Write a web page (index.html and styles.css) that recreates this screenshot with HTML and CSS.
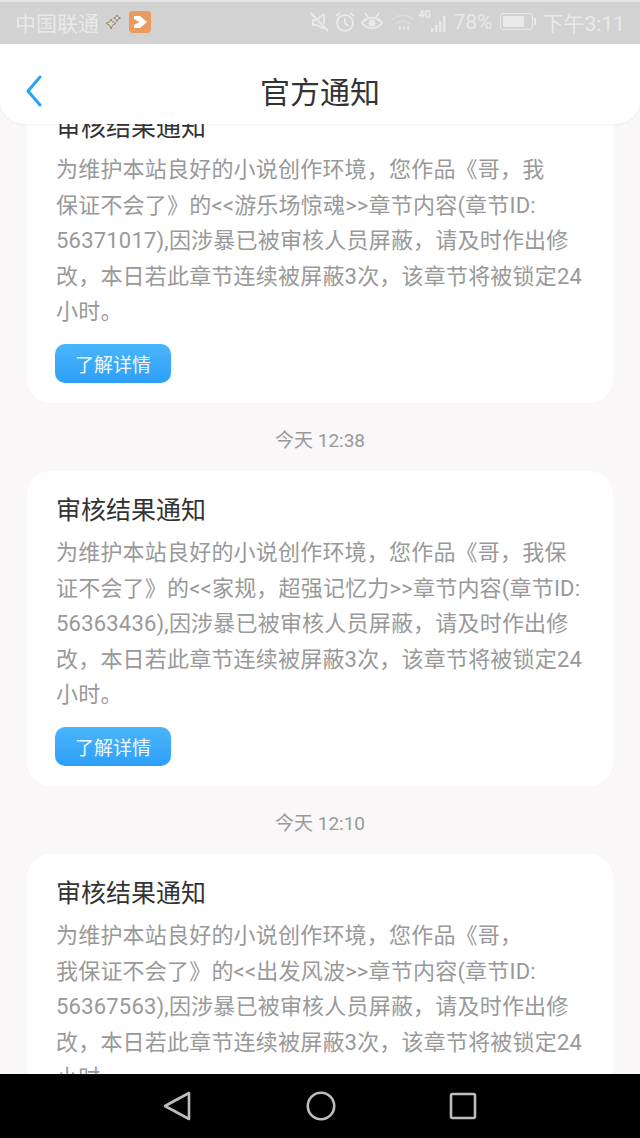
FILE: index.html
```html
<!DOCTYPE html>
<html lang="zh-CN">
<head>
  <meta charset="UTF-8" />
  <meta name="viewport" content="width=device-width, initial-scale=1.0"/>
  <title>官方通知</title>
  <link rel="stylesheet" href="styles.css">
</head>
<body>
  <!-- Status bar -->
  <div class="status-bar">
    <div class="status-left">
      <span>中国联通</span>
      <svg class="sparkle" width="15" height="15" viewBox="0 0 15 15">
        <path d="M5 5 L6.5 8 L10 9.5 L6.5 11 L5 15 L3.5 11 L0 9.5 L3.5 8 Z" fill="#e6dfc4" stroke="#8d8570" stroke-width="1"/>
        <path d="M11 1 L12 3 L14.5 4 L12 5 L11 7.5 L10 5 L7.5 4 L10 3 Z" fill="#eee8d2" stroke="#8d8570" stroke-width="1"/>
      </svg>
      <svg class="app-icon" width="22" height="22" viewBox="0 0 22 22">
        <rect width="22" height="22" rx="4" fill="#eb9a60"/>
        <path d="M5 5 H11 L18 11 L11 17 H5 V14 L10.5 11 L5 8 Z" fill="#fff"/>
      </svg>
    </div>
    <div class="status-right">
      <svg class="ic-mute" width="20" height="20" viewBox="0 0 20 20" fill="none" stroke="#e9e9e9" stroke-width="2">
        <path d="M15 2 V12 M15 17 L8 13 H4 V8 H7 L15 2"/>
        <path d="M2 1 L19 19"/>
      </svg>
      <svg class="ic-alarm" width="22" height="22" viewBox="0 0 22 22" fill="none" stroke="#e9e9e9" stroke-width="2">
        <circle cx="11" cy="12" r="8"/>
        <path d="M11 7 V12 L14.5 15 M2 5 L6 2 M20 5 L16 2"/>
      </svg>
      <svg class="ic-eye" width="22" height="20" viewBox="0 0 22 20" fill="none" stroke="#e9e9e9" stroke-width="2">
        <path d="M1 11 C6 4 16 4 21 11 C16 18 6 18 1 11 Z"/>
        <circle cx="11" cy="11" r="3.5" fill="#e9e9e9" stroke="none"/>
        <path d="M4 1 L7 5 M18 1 L15 5"/>
      </svg>
      <svg class="ic-wifi" width="24" height="16" viewBox="0 0 24 16" fill="none" stroke="#dedede" stroke-width="1.5">
        <path d="M1 6 C7 0 17 0 23 6 M5 10 C9 6 15 6 19 10"/>
        <path d="M8 14 H10 M12 14 H14 M16 14 H18" stroke="#e9e9e9" stroke-width="3"/>
      </svg>
      <div class="signal">
        <span class="net">4G</span>
        <svg width="15" height="16" viewBox="0 0 15 16" fill="#e9e9e9">
          <rect x="0" y="12" width="2.4" height="4"/>
          <rect x="4" y="9" width="2.4" height="7"/>
          <rect x="8" y="5" width="2.4" height="11"/>
          <rect x="12" y="0" width="2.4" height="16"/>
        </svg>
      </div>
      <span class="pct">78%</span>
      <div class="battery"><div class="battery-level" style="width: 78%"></div></div>
      <span class="clock">下午3:11</span>
    </div>
  </div>

  <div class="screen">
    <!-- Title bar -->
    <div class="title-bar">
      <svg class="back" width="18" height="32" viewBox="0 0 18 32" fill="none" stroke="#2aa4f0" stroke-width="3" stroke-linecap="round" stroke-linejoin="round">
        <path d="M15 2 L3 16 L15 30"/>
      </svg>
      <h1>官方通知</h1>
    </div>

    <div class="list">
      <div class="card">
        <h2>审核结果通知</h2>
        <p>为维护本站良好的小说创作环境，您作品《哥，我<br>保证不会了》的&lt;&lt;游乐场惊魂&gt;&gt;章节内容(章节ID:<br>56371017),因涉暴已被审核人员屏蔽，请及时作出修<br>改，本日若此章节连续被屏蔽3次，该章节将被锁定24<br>小时。</p>
        <button class="more-btn">了解详情</button>
      </div>
      <div class="time">今天 12:38</div>
      <div class="card">
        <h2>审核结果通知</h2>
        <p>为维护本站良好的小说创作环境，您作品《哥，我保<br>证不会了》的&lt;&lt;家规，超强记忆力&gt;&gt;章节内容(章节ID:<br>56363436),因涉暴已被审核人员屏蔽，请及时作出修<br>改，本日若此章节连续被屏蔽3次，该章节将被锁定24<br>小时。</p>
        <button class="more-btn">了解详情</button>
      </div>
      <div class="time">今天 12:10</div>
      <div class="card">
        <h2>审核结果通知</h2>
        <p>为维护本站良好的小说创作环境，您作品《哥，<br>我保证不会了》的&lt;&lt;出发风波&gt;&gt;章节内容(章节ID:<br>56367563),因涉暴已被审核人员屏蔽，请及时作出修<br>改，本日若此章节连续被屏蔽3次，该章节将被锁定24<br>小时。</p>
        <button class="more-btn">了解详情</button>
      </div>
    </div>
  </div>

  <!-- Android nav buttons -->
  <div class="nav-bar">
    <svg width="30" height="32" viewBox="0 0 30 32" fill="none" stroke="#bdbdbd" stroke-width="2.6" stroke-linejoin="round">
      <path d="M27 3 V29 L3 16 Z"/>
    </svg>
    <svg width="30" height="30" viewBox="0 0 30 30" fill="none" stroke="#bdbdbd" stroke-width="2.6">
      <circle cx="15" cy="15" r="13.2"/>
    </svg>
    <svg width="28" height="28" viewBox="0 0 28 28" fill="none" stroke="#bdbdbd" stroke-width="2.6" stroke-linejoin="round">
      <rect x="2" y="2" width="24" height="24" rx="1.5"/>
    </svg>
  </div>
</body>
</html>
```

FILE: styles.css
```css
* {
  margin: 0; padding: 0; box-sizing: border-box;
}

body {
  width: 640px;
  height: 1138px;
  overflow: hidden;
  display: flex;
  flex-direction: column;
  background: #faf7f8;
  font-family: "Roboto", "Noto Sans CJK SC", sans-serif;
}

.status-bar {
  height: 44px;
  flex: none;
  background: #d2d2d2;
  border-top: 2px solid #e4e4e4;
  display: flex;
  justify-content: space-between;
  align-items: center;
  padding: 0 15px 3px;
  color: #e9e9e9;
  font-size: 21px;
}

.status-left {
  display: flex;
  align-items: center;
}

.sparkle {
  margin-left: 7px;
}

.app-icon {
  margin-left: 8px;
}

.status-right {
  display: flex;
  align-items: center;
}

.ic-alarm {
  margin-left: 5px;
}

.ic-eye {
  margin-left: 5px;
}

.ic-wifi {
  margin-left: 8px;
}

.signal {
  position: relative;
  width: 27px;
  height: 20px;
  margin-left: 4px;
  display: flex;
  justify-content: flex-end;
  align-items: flex-end;
}

.net {
  position: absolute;
  left: 0;
  top: -3px;
  font-size: 10px;
  font-weight: bold;
}

.pct {
  margin-left: 8px;
}

.battery {
  width: 33px;
  height: 17px;
  margin: 0 3px 0 7px;
  padding: 2px;
  border: 1px solid #e9e9e9;
  border-radius: 3px;
  position: relative;
}

.battery::after {
  content: "";
  position: absolute;
  right: -4px;
  top: 4px;
  width: 2px;
  height: 7px;
  background: #e9e9e9;
}

.battery-level {
  height: 100%;
  background: #e9e9e9;
  border-radius: 1px;
}

.clock {
  margin-left: 7px;
}

.screen {
  position: relative;
  flex: 1;
  overflow: hidden;
}

.title-bar {
  position: absolute;
  top: 0;
  left: 0;
  right: 0;
  height: 80px;
  padding-top: 12px;
  background: #fff;
  border-radius: 0 0 24px 24px;
  box-shadow: 0 1px 3px rgba(0, 0, 0, 0.05);
  display: flex;
  justify-content: center;
  align-items: center;
  z-index: 1;
}

.title-bar h1 {
  font-size: 30px;
  font-weight: normal;
  color: #333;
}

.back {
  position: absolute;
  left: 25px;
  top: 31px;
}

.list {
  padding: 44px 27px 0;
}

.card {
  background: #fff;
  border-radius: 24px;
  padding: 22px 29px 20px;
  height: 315px;
}

.card h2 {
  font-size: 25px;
  line-height: 36px;
  font-weight: normal;
  color: #333;
  margin-bottom: 6px;
}

.card p {
  font-size: 22px;
  line-height: 35.5px;
  letter-spacing: 0.2px;
  color: #999;
  white-space: nowrap;
}

.more-btn {
  display: block;
  width: 116px;
  height: 39px;
  margin-top: 14.5px;
  margin-left: -1px;
  border: none;
  border-radius: 10px;
  background: linear-gradient(#4ab5fb, #2d9ff8);
  color: #f2f9ff;
  font-family: inherit;
  font-size: 19px;
}

.time {
  height: 68px;
  padding-top: 2px;
  display: flex;
  justify-content: center;
  align-items: center;
  font-size: 19px;
  color: #999;
}

.nav-bar {
  height: 64px;
  flex: none;
  background: #000;
  display: flex;
  justify-content: space-between;
  align-items: center;
  padding: 0 163px 0 162px;
}
```
